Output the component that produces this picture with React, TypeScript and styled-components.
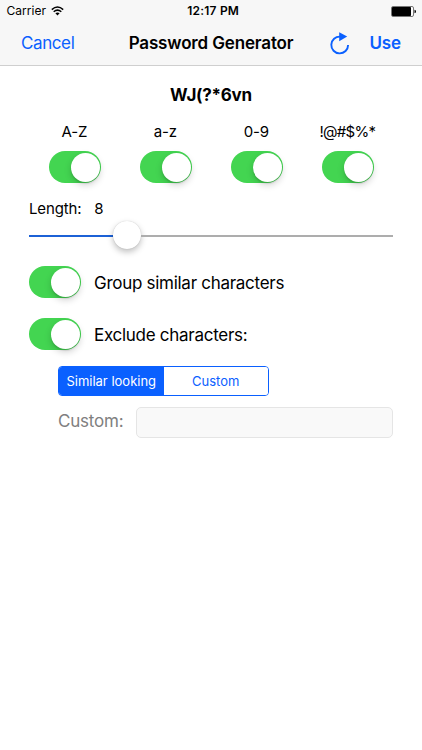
import React from "react";
import styled, { createGlobalStyle } from "styled-components";

const BLUE = "#0a60ff";

const GlobalStyle = createGlobalStyle`
  * { box-sizing: border-box; }
  body {
    margin: 0;
    background: #fff;
    color: #000;
    font-family: Inter, "Liberation Sans", sans-serif;
  }
`;

const Screen = styled.div`
  width: 422px;
  height: 750px;
  overflow: hidden;
  background: #fff;
`;

const Header = styled.header`
  height: 66px;
  background: #f7f7f7;
  border-bottom: 1px solid #cfcfcf;
`;

const StatusBar = styled.div`
  display: grid;
  grid-template-columns: 1fr auto 1fr;
  align-items: center;
  height: 22px;
  padding: 0 6px 0 6.5px;
`;

const Carrier = styled.span`
  display: flex;
  align-items: center;
  gap: 5px;
  font-size: 12px;
  letter-spacing: 0.05px;
  line-height: 22px;
`;

const Clock = styled.span`
  padding-left: 4px;
  font-size: 12px;
  font-weight: 600;
  letter-spacing: 0.2px;
  line-height: 22px;
`;

const BatteryIcon = styled.svg`
  justify-self: end;
  display: block;
`;

const NavBar = styled.nav`
  display: flex;
  align-items: center;
  height: 42px;
  padding: 0 21px;
  font-size: 17px;
`;

const NavButton = styled.button<{ $bold?: boolean }>`
  padding: 0;
  border: 0;
  background: none;
  color: ${BLUE};
  font: inherit;
  font-weight: ${(p) => (p.$bold ? 600 : 400)};
  letter-spacing: ${(p) => (p.$bold ? "-0.1px" : "-0.4px")};
  line-height: 22px;
`;

const Title = styled.h1`
  margin: 0 0 0 54.3px;
  width: 202px;
  font-size: 17px;
  font-weight: 600;
  letter-spacing: -0.15px;
  line-height: 22px;
  white-space: nowrap;
`;

const RefreshButton = styled(NavButton)`
  width: 20px;
  height: 23px;
  margin-right: 19px;
  svg { display: block; }
`;

const Content = styled.main`
  padding: 18px 29px 0 29px;
`;

const Password = styled.div`
  height: 22px;
  font-size: 17px;
  font-weight: 700;
  letter-spacing: -0.25px;
  line-height: 22px;
  text-align: center;
`;

const CharacterSets = styled.div`
  display: grid;
  grid-template-columns: repeat(4, 91px);
  margin: 16px 0 0 0.9px;
`;

const CharacterSet = styled.label`
  display: flex;
  flex-direction: column;
  align-items: center;
  gap: 9px;
`;

const SetName = styled.span<{ $tight: boolean }>`
  padding-right: 2px;
  font-size: 15px;
  letter-spacing: ${(p) => (p.$tight ? "-0.7px" : "-0.1px")};
  line-height: 20px;
`;

const Switch = styled.span`
  display: flex;
  flex: none;
  justify-content: flex-end;
  width: 52px;
  height: 32px;
  padding: 1.5px;
  border-radius: 16px;
  background: #43d551;
`;

const SwitchKnob = styled.span`
  width: 29px;
  height: 29px;
  border-radius: 50%;
  background: #fff;
  box-shadow: 0 3px 7px rgba(0, 0, 0, 0.18), 0 2px 1px rgba(0, 0, 0, 0.08);
`;

const LengthRow = styled.div`
  display: flex;
  gap: 13px;
  margin-top: 16px;
  font-size: 15px;
  letter-spacing: -0.15px;
  line-height: 20px;
`;

const Slider = styled.div`
  display: flex;
  align-items: center;
  height: 30px;
  margin-top: 1px;
`;

const SliderTrack = styled.span<{ $filled?: boolean }>`
  height: 2px;
  width: ${(p) => (p.$filled ? "84px" : "auto")};
  flex: ${(p) => (p.$filled ? "none" : "1")};
  margin-top: 2px;
  background: ${(p) => (p.$filled ? "#1c61d6" : "#adadad")};
`;

const SliderThumb = styled.span`
  width: 28px;
  height: 28px;
  border-radius: 50%;
  background: #fff;
  box-shadow: 0 3px 6px rgba(0, 0, 0, 0.25), 0 0 1px rgba(0, 0, 0, 0.22);
`;

const OptionRow = styled.label<{ $top: number }>`
  display: flex;
  align-items: center;
  gap: 13px;
  height: 32px;
  margin-top: ${(p) => p.$top}px;
`;

const OptionText = styled.span`
  padding-top: 2px;
  font-size: 17px;
  letter-spacing: -0.28px;
  line-height: 22px;
`;

const Segments = styled.div`
  display: flex;
  width: 211px;
  height: 30px;
  margin: 16px 0 0 29px;
  overflow: hidden;
  border: 1px solid ${BLUE};
  border-radius: 4px;
`;

const Segment = styled.button<{ $active?: boolean }>`
  flex: 1;
  padding: 0;
  border: 0;
  background: ${(p) => (p.$active ? BLUE : "#fff")};
  color: ${(p) => (p.$active ? "#fff" : BLUE)};
  font: 400 13px/28px Inter, "Liberation Sans", sans-serif;
  white-space: nowrap;
`;

const CustomRow = styled.div`
  display: flex;
  align-items: center;
  gap: 12px;
  margin: 11px 0 0 29px;
`;

const CustomLabel = styled.label`
  width: 66px;
  padding-bottom: 3px;
  color: #808080;
  font-size: 17px;
  letter-spacing: -0.2px;
  line-height: 22px;
`;

const CustomInput = styled.input`
  flex: 1;
  min-width: 0;
  height: 31px;
  padding: 0 8px;
  border: 1px solid #e5e5e5;
  border-radius: 5px;
  background: #f9f9f9;
`;

const Toggle = () => (
  <Switch>
    <SwitchKnob />
  </Switch>
);

const WifiIcon = () => (
  <svg width="13" height="10" viewBox="0 0 13 10" fill="none" stroke="#000">
    <path d="M0.8 3.6Q6.5 -1.6 12.2 3.6" strokeWidth="1.5" />
    <path d="M2.7 5.8Q6.5 2.4 10.3 5.8" strokeWidth="1.5" />
    <path d="M4.4 7.3Q6.5 5.6 8.6 7.3L6.5 9.5Z" fill="#000" stroke="none" />
  </svg>
);

const RefreshIcon = () => (
  <svg width="20" height="23" viewBox="0 0 20 23">
    <path d="M10.2 4.6A8.4 8.4 0 1 0 18.1 13" fill="none" stroke={BLUE} strokeWidth="1.9" />
    <path d="M9.2 0.2L17.2 4.6L9.2 9.2Z" fill={BLUE} />
  </svg>
);

const characterSets = ["A-Z", "a-z", "0-9", "!@#$%*"];

export default function App() {
  return (
    <>
      <GlobalStyle />
      <Screen>
        <Header>
          <StatusBar>
            <Carrier>
              Carrier
              <WifiIcon />
            </Carrier>
            <Clock>12:17 PM</Clock>
            <BatteryIcon width="25" height="11" viewBox="0 0 25 11">
              <rect x="0.5" y="0.5" width="22" height="10" rx="1.5" fill="#fff" stroke="#777" />
              <rect x="1" y="1" width="19" height="9" rx="0.7" />
              <path d="M23.5 3.8Q25 4 25 5.5T23.5 7.2Z" />
            </BatteryIcon>
          </StatusBar>
          <NavBar>
            <NavButton>Cancel</NavButton>
            <Title>Password Generator</Title>
            <RefreshButton aria-label="Regenerate">
              <RefreshIcon />
            </RefreshButton>
            <NavButton $bold>Use</NavButton>
          </NavBar>
        </Header>
        <Content>
          <Password>WJ(?*6vn</Password>
          <CharacterSets>
            {characterSets.map((name) => (
              <CharacterSet key={name}>
                <SetName $tight={name.length > 3}>{name}</SetName>
                <Toggle />
              </CharacterSet>
            ))}
          </CharacterSets>
          <LengthRow>
            <span>Length:</span>
            <span>8</span>
          </LengthRow>
          <Slider>
            <SliderTrack $filled />
            <SliderThumb />
            <SliderTrack />
          </Slider>
          <OptionRow $top={16}>
            <Toggle />
            <OptionText>Group similar characters</OptionText>
          </OptionRow>
          <OptionRow $top={20}>
            <Toggle />
            <OptionText>Exclude characters:</OptionText>
          </OptionRow>
          <Segments>
            <Segment $active>Similar looking</Segment>
            <Segment>Custom</Segment>
          </Segments>
          <CustomRow>
            <CustomLabel>Custom:</CustomLabel>
            <CustomInput disabled aria-label="Custom characters" />
          </CustomRow>
        </Content>
      </Screen>
    </>
  );
}
